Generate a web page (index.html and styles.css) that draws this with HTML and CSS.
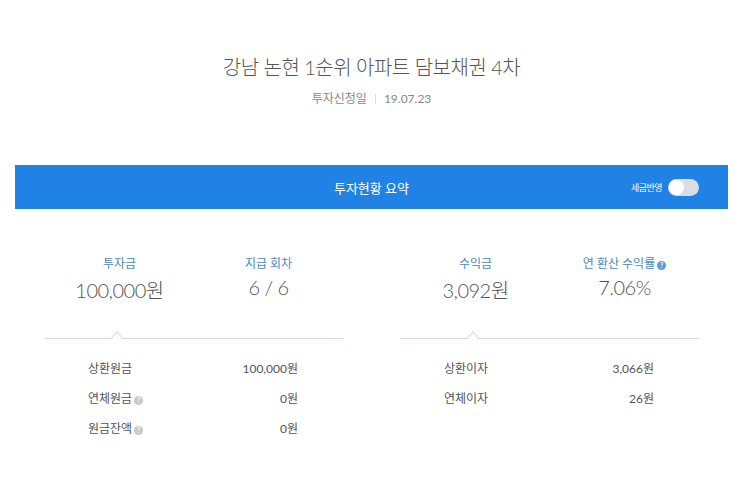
FILE: index.html
```html
<!DOCTYPE html>
<html>
    <head>
        <title>투자현황</title>
        <link rel="stylesheet" href="styles.css">
    </head>
    <body>
        <div class="head">
            <h1>강남 논현 1순위 아파트 담보채권 4차</h1>
            <div class="date">투자신청일<span class="bar"></span>19.07.23</div>
        </div>

        <div class="summary">
            <div class="summary-title">
                <span>투자현황 요약</span>
                <div class="tax">
                    세금반영
                    <span class="toggle"><span class="knob"></span></span>
                </div>
            </div>

            <div class="panels">
                <div class="panel">
                    <div class="stats">
                        <div class="stat">
                            <div class="label">투자금</div>
                            <div class="value">100,000원</div>
                        </div>
                        <div class="stat">
                            <div class="label">지급 회차</div>
                            <div class="value">6 / 6</div>
                        </div>
                    </div>
                    <div class="divider"><span class="caret"></span></div>
                    <div class="rows">
                        <div class="row"><span>상환원금</span><span>100,000원</span></div>
                        <div class="row"><span>연체원금<i class="help gray">?</i></span><span>0원</span></div>
                        <div class="row"><span>원금잔액<i class="help gray">?</i></span><span>0원</span></div>
                    </div>
                </div>

                <div class="panel">
                    <div class="stats">
                        <div class="stat">
                            <div class="label">수익금</div>
                            <div class="value">3,092원</div>
                        </div>
                        <div class="stat">
                            <div class="label">연 환산 수익률<i class="help">?</i></div>
                            <div class="value">7.06%</div>
                        </div>
                    </div>
                    <div class="divider"><span class="caret"></span></div>
                    <div class="rows">
                        <div class="row"><span>상환이자</span><span>3,066원</span></div>
                        <div class="row"><span>연체이자</span><span>26원</span></div>
                    </div>
                </div>
            </div>
        </div>
    </body>
</html>
```

FILE: styles.css
```css
body {
    margin: 0;
    padding: 0;
    background: #fff;
    color: #555;
    font-family: Lato, "Noto Sans CJK KR", sans-serif;
}

.head {
    text-align: center;
    padding-top: 52px;
}

h1 {
    margin: 0;
    font-size: 20px;
    font-weight: 300;
    color: #555;
    letter-spacing: -0.5px;
}

.date {
    margin-top: 8px;
    font-size: 12px;
    color: #888;
}

.date .bar {
    display: inline-block;
    width: 1px;
    height: 10px;
    background: #ddd;
    margin: 0 8px;
    vertical-align: -1px;
}

.summary {
    margin: 59px 15px 0;
}

.summary-title {
    height: 44px;
    background: #1f82e4;
    color: #fff;
    font-size: 13px;
    display: flex;
    align-items: center;
    justify-content: center;
    position: relative;
}

.tax {
    position: absolute;
    right: 29px;
    top: 14px;
    display: flex;
    align-items: center;
    gap: 6px;
    font-size: 9px;
    letter-spacing: -0.5px;
}

.toggle {
    width: 31px;
    height: 17px;
    border-radius: 9px;
    background: #dcdde3;
    position: relative;
}

.toggle .knob {
    position: absolute;
    left: 1px;
    top: 1px;
    width: 15px;
    height: 15px;
    border-radius: 50%;
    background: #fff;
}

.panels {
    display: flex;
    gap: 58px;
    padding: 0 29px 0 30px;
}

.panel {
    flex: 1;
}

.stats {
    display: flex;
    padding-top: 45px;
}

.stat {
    flex: 1;
    text-align: center;
}

.label {
    font-size: 12px;
    color: #4a88c6;
    height: 18px;
}

.value {
    margin-top: 3px;
    font-size: 20px;
    font-weight: 300;
    color: #555;
    letter-spacing: -0.5px;
}

.divider {
    margin-top: 34px;
    height: 1px;
    background: #cddde8;
    position: relative;
}

.caret {
    position: absolute;
    left: 68px;
    top: -5px;
    width: 7px;
    height: 7px;
    background: #fff;
    border-left: 1px solid #cddde8;
    border-top: 1px solid #cddde8;
    transform: rotate(45deg);
}

.rows {
    padding: 20px 45px 0 43px;
}

.row {
    display: flex;
    justify-content: space-between;
    height: 30px;
    font-size: 12px;
    color: #555;
}

.help {
    display: inline-block;
    width: 9px;
    height: 9px;
    line-height: 9px;
    border-radius: 50%;
    background: #5d9be0;
    color: #fff;
    font-size: 7px;
    font-style: normal;
    font-weight: bold;
    text-align: center;
    margin-left: 2px;
    vertical-align: 0;
}

.help.gray {
    background: #c8c8c8;
}
```
